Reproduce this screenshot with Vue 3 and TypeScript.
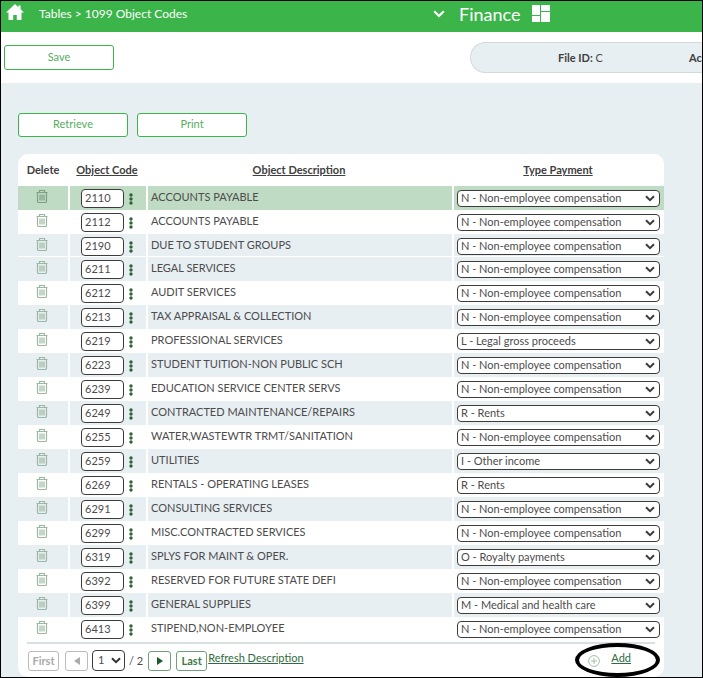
<script setup lang="ts">
import { ref } from 'vue'

interface CodeRow {
  code: string
  description: string
  payment: string
  tone: 'selected' | 'plain' | 'shaded'
  divider?: boolean
}

const paymentTypes: Record<string, string> = {
  N: 'N - Non-employee compensation',
  L: 'L - Legal gross proceeds',
  R: 'R - Rents',
  I: 'I - Other income',
  O: 'O - Royalty payments',
  M: 'M - Medical and health care',
}

const rows = ref<CodeRow[]>([
  { code: '2110', description: 'ACCOUNTS PAYABLE', payment: 'N', tone: 'selected' },
  { code: '2112', description: 'ACCOUNTS PAYABLE', payment: 'N', tone: 'plain' },
  { code: '2190', description: 'DUE TO STUDENT GROUPS', payment: 'N', tone: 'shaded', divider: true },
  { code: '6211', description: 'LEGAL SERVICES', payment: 'N', tone: 'shaded' },
  { code: '6212', description: 'AUDIT SERVICES', payment: 'N', tone: 'plain' },
  { code: '6213', description: 'TAX APPRAISAL & COLLECTION', payment: 'N', tone: 'shaded' },
  { code: '6219', description: 'PROFESSIONAL SERVICES', payment: 'L', tone: 'plain' },
  { code: '6223', description: 'STUDENT TUITION-NON PUBLIC SCH', payment: 'N', tone: 'shaded' },
  { code: '6239', description: 'EDUCATION SERVICE CENTER SERVS', payment: 'N', tone: 'plain' },
  { code: '6249', description: 'CONTRACTED MAINTENANCE/REPAIRS', payment: 'R', tone: 'shaded' },
  { code: '6255', description: 'WATER,WASTEWTR TRMT/SANITATION', payment: 'N', tone: 'plain' },
  { code: '6259', description: 'UTILITIES', payment: 'I', tone: 'shaded' },
  { code: '6269', description: 'RENTALS - OPERATING LEASES', payment: 'R', tone: 'plain' },
  { code: '6291', description: 'CONSULTING SERVICES', payment: 'N', tone: 'shaded' },
  { code: '6299', description: 'MISC.CONTRACTED SERVICES', payment: 'N', tone: 'plain' },
  { code: '6319', description: 'SPLYS FOR MAINT & OPER.', payment: 'O', tone: 'shaded' },
  { code: '6392', description: 'RESERVED FOR FUTURE STATE DEFI', payment: 'N', tone: 'plain' },
  { code: '6399', description: 'GENERAL SUPPLIES', payment: 'M', tone: 'shaded' },
  { code: '6413', description: 'STIPEND,NON-EMPLOYEE', payment: 'N', tone: 'plain' },
])

const page = ref('1')
</script>

<template>
  <div class="app">
    <header class="topbar">
      <a class="home" href="#" aria-label="Home">
        <svg width="18" height="17" viewBox="0 0 18 17"><path d="M9 0 0 8.4h2.5V16h4.7v-5h3.6v5h4.7V8.4H18l-3.4-3.2V1.5h-2.2v1.7z" fill="#fff" /></svg>
      </a>
      <span class="crumbs">Tables &gt; 1099 Object Codes</span>
      <button class="module" type="button">
        <svg width="12" height="8" viewBox="0 0 12 8"><path d="M1.2 1.2 6 6l4.8-4.8" fill="none" stroke="#fff" stroke-width="2.2" /></svg>
        <span>Finance</span>
        <svg width="18" height="17" viewBox="0 0 18 17"><path d="M0 0h8v10H0zM9 0h9v6H9zM0 11h8v6H0zM9 7h9v10H9z" fill="#fff" /></svg>
      </button>
    </header>

    <div class="actions">
      <button class="btn" type="button">Save</button>
      <div class="info">
        <span class="file"><b>File ID:</b> C</span>
        <b>Ac</b>
      </div>
    </div>

    <main class="content">
      <div class="tools">
        <button class="btn" type="button">Retrieve</button>
        <button class="btn" type="button">Print</button>
      </div>

      <section class="card">
        <table>
          <colgroup>
            <col class="c-delete" />
            <col class="c-code" />
            <col />
            <col class="c-type" />
          </colgroup>
          <thead>
            <tr>
              <th>Delete</th>
              <th><a href="#">Object Code</a></th>
              <th><a href="#">Object Description</a></th>
              <th><a href="#">Type Payment</a></th>
            </tr>
          </thead>
          <tbody>
            <tr v-for="row in rows" :key="row.code" :class="[row.tone, { divider: row.divider }]">
              <td>
                <button class="trash" type="button" :aria-label="`Delete ${row.code}`">
                  <svg width="12" height="13" viewBox="0 0 12 13" fill="none" stroke="currentColor">
                    <path d="M.5 2.5h11M3.5 2.5v-2h5v2M1.5 3v8.2q0 1.3 1.3 1.3h6.4q1.3 0 1.3-1.3V3M4 4.5v6M6 4.5v6M8 4.5v6" stroke-width="1.2" />
                  </svg>
                </button>
              </td>
              <td>
                <div class="code">
                  <input v-model="row.code" type="text" :aria-label="`Object code ${row.code}`" />
                  <button type="button" aria-label="More">
                    <svg width="4" height="12" viewBox="0 0 4 12" fill="#2c6335"><circle cx="2" cy="2" r="1.7" /><circle cx="2" cy="6" r="1.7" /><circle cx="2" cy="10" r="1.7" /></svg>
                  </button>
                </div>
              </td>
              <td class="desc">{{ row.description }}</td>
              <td>
                <div class="pick">
                  <select v-model="row.payment" :aria-label="`Type payment ${row.code}`">
                    <option v-for="(label, key) in paymentTypes" :key="key" :value="key">{{ label }}</option>
                  </select>
                  <svg width="10" height="7" viewBox="0 0 10 7"><path d="m1 1.2 4 4 4-4" fill="none" stroke="#3c3c3c" stroke-width="2" /></svg>
                </div>
              </td>
            </tr>
          </tbody>
        </table>

        <footer class="pager">
          <button class="nav off" type="button" disabled>First</button>
          <button class="nav arrow off" type="button" disabled aria-label="Previous page">
            <svg width="6" height="8" viewBox="0 0 6 8"><path d="M6 0v8L0 4z" fill="currentColor" /></svg>
          </button>
          <div class="pick page">
            <select v-model="page" aria-label="Page">
              <option>1</option>
              <option>2</option>
            </select>
            <svg width="10" height="7" viewBox="0 0 10 7"><path d="m1 1.2 4 4 4-4" fill="none" stroke="#333" stroke-width="2" /></svg>
          </div>
          <span class="total">/ 2</span>
          <button class="nav arrow" type="button" aria-label="Next page">
            <svg width="6" height="8" viewBox="0 0 6 8"><path d="M0 0v8l6-4z" fill="#1f5a2b" /></svg>
          </button>
          <button class="nav" type="button">Last</button>
          <a class="refresh" href="#">Refresh Description</a>
          <div class="add">
            <svg width="12" height="12" viewBox="0 0 12 12" fill="none" stroke="#a3bda7"><circle cx="6" cy="6" r="5.4" /><path d="M6 3v6M3 6h6" /></svg>
            <a href="#">Add</a>
          </div>
        </footer>
      </section>
    </main>
  </div>
</template>

<style>
body {
  background: #fff;
}
</style>

<style scoped>
.app {
  display: flex;
  flex-direction: column;
  box-sizing: border-box;
  min-height: 100vh;
  overflow: hidden;
  border: 1px solid #000;
  background: #fff;
  color: #4c4c4c;
  font: 11px/16px Lato, sans-serif;
}
button,
input,
select {
  box-sizing: border-box;
  margin: 0;
  font: inherit;
  color: inherit;
}
button {
  padding: 0;
  border: 0;
  background: none;
}
b,
th {
  color: #404040;
  font-weight: bold;
}
svg {
  display: block;
  flex: none;
}
.topbar {
  display: flex;
  align-items: flex-start;
  height: 31px;
  padding: 0 5px;
  background: #3bb54a;
  color: #fff;
  font-size: 12px;
}
.home {
  padding-top: 3px;
}
.crumbs {
  flex: 1;
  padding: 5px 0 0 15px;
}
.module {
  display: flex;
  flex: 0 0 264px;
  align-items: center;
  height: 25px;
  font-size: 18px;
}
.module span {
  padding: 0 12px 0 14px;
}
.actions {
  display: flex;
  justify-content: space-between;
  height: 51px;
  padding: 0 0 0 3px;
}
.btn {
  width: 110px;
  height: 24px;
  padding-bottom: 2px;
  border: 1px solid #3bb54a;
  border-radius: 3px;
  background: #fff;
  color: #57ad61;
}
.actions .btn {
  margin-top: 13px;
  height: 25px;
}
.info {
  display: flex;
  flex: 0 0 232px;
  align-items: center;
  box-sizing: border-box;
  height: 31px;
  margin-top: 10px;
  padding-left: 87px;
  overflow: hidden;
  border: 1px solid #d2dadb;
  border-right: 0;
  border-radius: 16px 0 0 16px;
  background: #e8eff3;
  white-space: nowrap;
}
.file {
  flex: 0 0 131px;
}
.content {
  flex: 1;
  padding: 30px 38px 0 17px;
  background: #e8eff3;
}
.tools {
  display: flex;
  gap: 9px;
  margin-bottom: 17px;
}
.card {
  border-radius: 10px;
  background: #fff;
}
table {
  width: 100%;
  border-spacing: 0;
  table-layout: fixed;
}
.c-delete {
  width: 50px;
}
.c-code {
  width: 78px;
}
.c-type {
  width: 212px;
}
th {
  height: 32px;
  padding: 0;
}
th a {
  color: inherit;
}
td {
  box-sizing: border-box;
  height: 24px;
  padding: 0;
  vertical-align: top;
}
td + td {
  border-left: 2px solid #fff;
}
.selected td {
  background: #c0dbc4;
}
.shaded td {
  background: #e8eff3;
}
.divider td {
  height: 23px;
  border-bottom: 1px solid #fff;
}
.trash {
  display: block;
  margin: 4px 0 0 18px;
  color: #9db8a1;
}
.selected .trash {
  color: #7d9f83;
}
.code {
  display: flex;
  align-items: center;
  gap: 5px;
  padding: 3px 0 0 11px;
}
.code input {
  width: 43px;
  height: 19px;
  padding: 0 3px 2px;
  border: 1px solid #3c3c3c;
  border-radius: 4px;
  background: #fff;
}
.desc {
  padding: 3px 0 0 3px;
  white-space: nowrap;
}
.pick {
  position: relative;
  padding: 4px 4px 0 3px;
}
.pick select {
  display: block;
  width: 100%;
  height: 17px;
  padding: 0 3px 2px;
  border: 1px solid #3c3c3c;
  border-radius: 4px;
  appearance: none;
  background: #fff;
  line-height: 13px;
}
.pick svg {
  position: absolute;
  top: 9px;
  right: 9px;
  pointer-events: none;
}
.pager {
  display: flex;
  align-items: center;
  height: 33px;
  margin: 1px 9px 0;
  border-top: 2px solid #d8e0e2;
}
.nav {
  display: flex;
  align-items: center;
  justify-content: center;
  width: 31px;
  height: 20px;
  margin: 0 1px;
  border: 1px solid #6fa377;
  border-radius: 3px;
  background: #fff;
  color: #3d7a48;
  font-weight: bold;
}
.nav.arrow {
  width: 23px;
  margin: 0 4px 0 5px;
}
.nav.off {
  border-color: #bbb;
  color: #aaa;
}
.pick.page {
  width: 33px;
  padding: 0;
}
.pick.page select {
  height: 21px;
  padding: 0 5px 2px;
}
.pick.page svg {
  top: 7px;
  right: 4px;
}
.total {
  padding-left: 4px;
}
.refresh,
.add a {
  margin-bottom: 5px;
  color: #2f6b40;
}
.add {
  position: relative;
  display: flex;
  align-items: center;
  gap: 11px;
  margin-left: auto;
  padding-right: 24px;
}
.add::after {
  position: absolute;
  inset: -7px -5px -6px -13px;
  border: 4px solid #000;
  border-radius: 50%;
  content: '';
  pointer-events: none;
}
</style>
